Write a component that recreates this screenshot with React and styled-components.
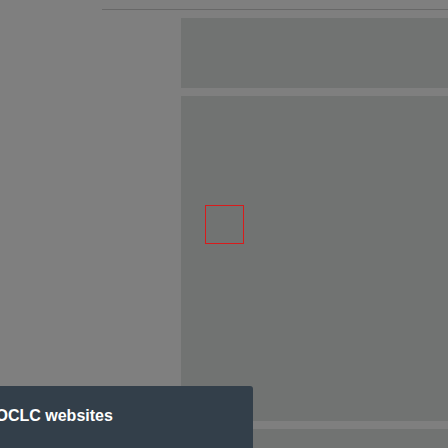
import React from "react";
import styled, { createGlobalStyle } from "styled-components";

const Global = createGlobalStyle`
  html, body { margin: 0; padding: 0; background: #7f7f7f; }
  body { font-family: "Liberation Sans", Arial, sans-serif; overflow: hidden; }
`;

const Page = styled.div`
  width: 448px;
  height: 448px;
  position: relative;
  overflow: hidden;
  background: #7f7f7f;
`;

const TopRule = styled.div`
  margin-left: 102px;
  height: 9px;
  border-bottom: 1px solid #686868;
`;

const Main = styled.main`
  margin-left: 181px;
  padding-top: 8px;
  display: flex;
  flex-direction: column;
  gap: 8px;
`;

const Panel = styled.section`
  background: #717372;
  height: ${(p) => p.$h}px;
  padding: ${(p) => p.$pad || "0"};
  box-sizing: border-box;
`;

const Placeholder = styled.div`
  width: 39px;
  height: 39px;
  box-sizing: border-box;
  border: 1px solid #d81b1b;
`;

const Footer = styled.div`
  position: absolute;
  left: 0;
  bottom: 0;
  width: 253px;
  height: 62px;
  background: #333f4a;
  border-top-right-radius: 3px;
  box-sizing: border-box;
  padding-top: 21px;
  overflow: hidden;
`;

const FooterTitle = styled.div`
  margin-left: -4.5px;
  color: #ffffff;
  font-weight: 700;
  font-size: 16px;
  line-height: 18px;
  white-space: nowrap;
`;

export default function App() {
  return (
    <Page>
      <Global />
      <TopRule />
      <Main>
        <Panel $h={70} />
        <Panel $h={325} $pad="109px 0 0 24px">
          <Placeholder />
        </Panel>
        <Panel $h={40} />
      </Main>
      <Footer>
        <FooterTitle>OCLC websites</FooterTitle>
      </Footer>
    </Page>
  );
}
